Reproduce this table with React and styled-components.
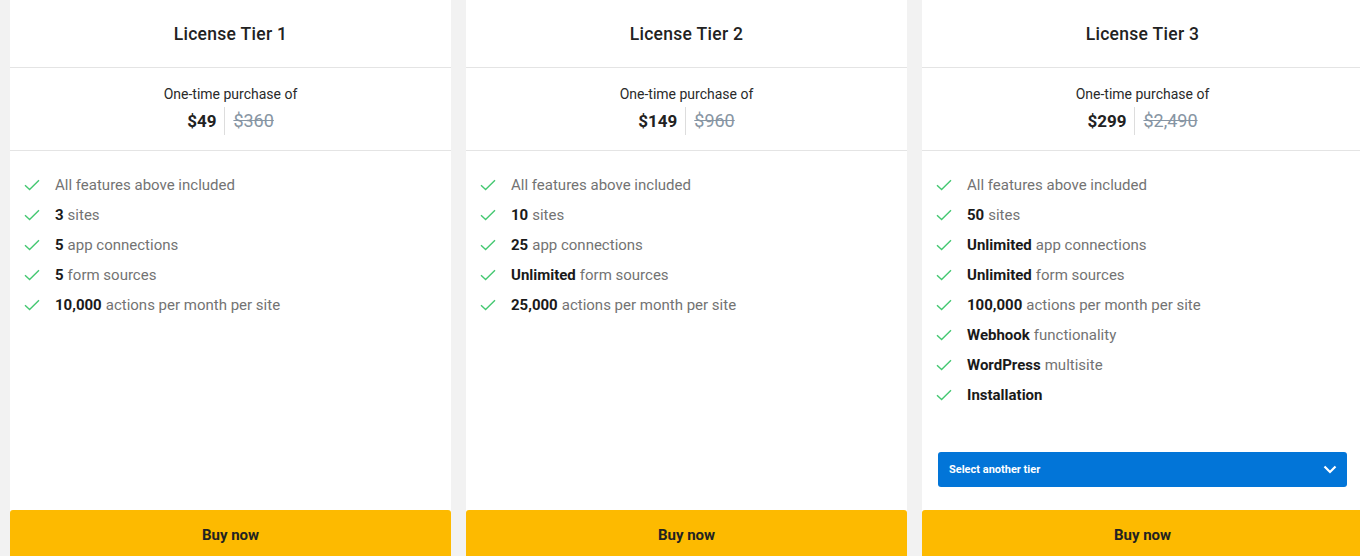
import React from "react";
import styled, { createGlobalStyle } from "styled-components";

const Global = createGlobalStyle`
  html, body { margin: 0; padding: 0; background: #f2f2f2; overflow: hidden; }
  body { font-family: Roboto, "Liberation Sans", sans-serif; }
  * { box-sizing: border-box; }
`;

const Page = styled.div`
  display: flex;
  gap: 15px;
  padding-left: 10px;
  width: 1400px;
  height: 556px;
  overflow: hidden;
  align-items: flex-start;
`;

const Card = styled.div`
  flex: 0 0 441px;
  background: #fff;
  display: flex;
  flex-direction: column;
  height: 560px;
`;

const Header = styled.div`
  flex: none;
  height: 68px;
  border-bottom: 1px solid #e4e4e4;
  display: flex;
  align-items: center;
  justify-content: center;
  font-size: 17.5px;
  font-weight: 500;
  letter-spacing: 0.3px;
  color: #222;
`;

const PriceBox = styled.div`
  flex: none;
  height: 83px;
  border-bottom: 1px solid #e4e4e4;
  display: flex;
  flex-direction: column;
  align-items: center;
  padding-top: 18px;
`;

const Caption = styled.div`
  font-size: 14px;
  color: #2a2a2a;
  line-height: 16px;
`;

const PriceRow = styled.div`
  display: flex;
  align-items: center;
  margin-top: 5px;
  height: 28px;
`;

const Price = styled.span`
  font-size: 17px;
  font-weight: 700;
  color: #222;
  padding-right: 8px;
  border-right: 1px solid #ddd;
  line-height: 28px;
`;

const OldPrice = styled.span`
  font-size: 18px;
  color: #8795a3;
  text-decoration: line-through;
  padding-left: 8px;
  line-height: 28px;
`;

const Body = styled.div`
  flex: 1;
  display: flex;
  flex-direction: column;
  padding: 19px 14px 0;
`;

const List = styled.ul`
  list-style: none;
  margin: 0;
  padding: 0;
`;

const Item = styled.li`
  display: flex;
  align-items: center;
  height: 30px;
  font-size: 15px;
  color: #737373;
`;

const Check = styled.svg`
  width: 16px;
  height: 12px;
  margin-right: 15px;
  flex: none;
`;

const Strong = styled.b`
  color: #1a1a1a;
  font-weight: 700;
  margin-right: 4px;
`;

const Select = styled.div`
  margin: 42px 2px 0;
  height: 35px;
  background: #0275d8;
  border-radius: 3px;
  display: flex;
  align-items: center;
  justify-content: space-between;
  padding: 0 10px 0 11px;
  color: #fff;
  font-size: 11px;
  font-weight: 700;
`;

const BuyButton = styled.button`
  border: none;
  height: 50px;
  width: 100%;
  background: #fdba00;
  border-radius: 3px 3px 0 0;
  font-family: Roboto, "Liberation Sans", sans-serif;
  font-size: 15px;
  font-weight: 700;
  color: #222;
  cursor: pointer;
  flex: none;
`;

const tiers = [
  {
    name: "License Tier 1",
    price: "$49",
    old: "$360",
    features: [
      [null, "All features above included"],
      ["3", "sites"],
      ["5", "app connections"],
      ["5", "form sources"],
      ["10,000", "actions per month per site"],
    ],
  },
  {
    name: "License Tier 2",
    price: "$149",
    old: "$960",
    features: [
      [null, "All features above included"],
      ["10", "sites"],
      ["25", "app connections"],
      ["Unlimited", "form sources"],
      ["25,000", "actions per month per site"],
    ],
  },
  {
    name: "License Tier 3",
    price: "$299",
    old: "$2,490",
    select: true,
    features: [
      [null, "All features above included"],
      ["50", "sites"],
      ["Unlimited", "app connections"],
      ["Unlimited", "form sources"],
      ["100,000", "actions per month per site"],
      ["Webhook", "functionality"],
      ["WordPress", "multisite"],
      ["Installation", ""],
    ],
  },
];

const CheckIcon = () => (
  <Check viewBox="0 0 16 12">
    <path d="M1 6.2 L5.6 10.6 L15 1.2" fill="none" stroke="#45c872" strokeWidth="1.4" />
  </Check>
);

const Chevron = () => (
  <svg width="14" height="9" viewBox="0 0 14 9">
    <path d="M1.5 1.5 L7 7 L12.5 1.5" fill="none" stroke="#fff" strokeWidth="2.2" />
  </svg>
);

export default function App() {
  return (
    <>
      <Global />
      <Page>
        {tiers.map((t) => (
          <Card key={t.name}>
            <Header>{t.name}</Header>
            <PriceBox>
              <Caption>One-time purchase of</Caption>
              <PriceRow>
                <Price>{t.price}</Price>
                <OldPrice>{t.old}</OldPrice>
              </PriceRow>
            </PriceBox>
            <Body>
              <List>
                {t.features.map(([b, rest], i) => (
                  <Item key={i}>
                    <CheckIcon />
                    {b && <Strong>{b}</Strong>}
                    {rest}
                  </Item>
                ))}
              </List>
              {t.select && (
                <Select>
                  <span>Select another tier</span>
                  <Chevron />
                </Select>
              )}
            </Body>
            <BuyButton>Buy now</BuyButton>
          </Card>
        ))}
      </Page>
    </>
  );
}
